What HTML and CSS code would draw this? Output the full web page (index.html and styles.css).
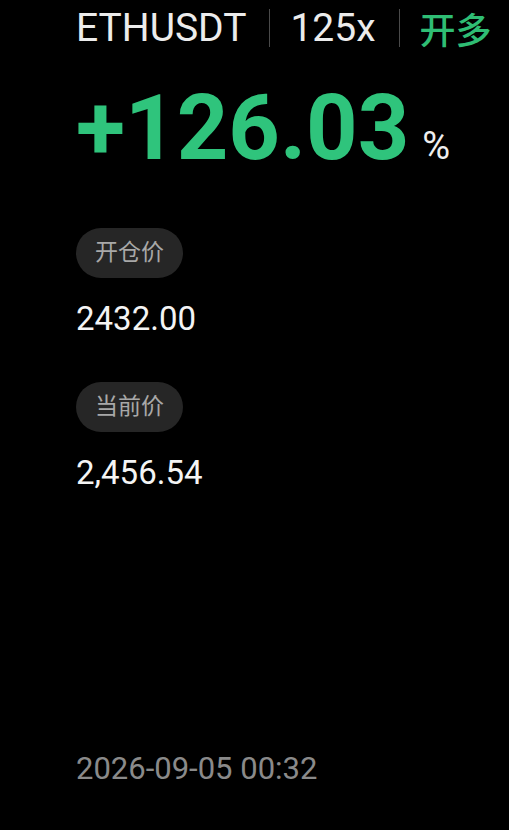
FILE: index.html
```html
<!DOCTYPE html>
<html lang="zh-CN">
<head>
    <meta charset="UTF-8">
    <meta name="viewport" content="width=device-width, initial-scale=1.0">
    <title>ETHUSDT</title>
    <link rel="stylesheet" href="styles.css">
</head>
<body>
    <div class="card">
        <div class="head">
            <span class="symbol">ETHUSDT</span>
            <span class="sep"></span>
            <span class="lev">125x</span>
            <span class="sep"></span>
            <span class="side">开多</span>
        </div>

        <div class="pnl">
            <span class="pnl-num">+126.03</span>
            <span class="pnl-unit">%</span>
        </div>

        <div class="row">
            <span class="pill">开仓价</span>
            <div class="val">2432.00</div>
        </div>
        <div class="row">
            <span class="pill">当前价</span>
            <div class="val">2,456.54</div>
        </div>

        <div class="time">2026-09-05 00:32</div>
    </div>
</body>
</html>
```

FILE: styles.css
```css
html, body {
    margin: 0;
    background: #000;
}
body {
    font-family: Roboto, "Noto Sans CJK SC", sans-serif;
    color: #f2f2f2;
    width: 509px;
    height: 830px;
    overflow: hidden;
}
.card {
    padding: 0 0 0 76px;
    display: flex;
    flex-direction: column;
    height: 830px;
    box-sizing: border-box;
}
.head {
    display: flex;
    align-items: center;
    height: 56px;
    font-size: 39px;
}
.symbol {
    color: #ececec;
}
.sep {
    width: 1px;
    height: 38px;
    background: #4a4a4a;
    margin: 0 20px 0 23px;
}
.lev {
    color: #ececec;
}
.side {
    color: #2fbd74;
    font-size: 36px;
    font-weight: 500;
}
.pnl {
    display: flex;
    align-items: baseline;
    margin-top: 20px;
    height: 104px;
}
.pnl-num {
    color: #2fc47c;
    font-size: 90px;
    font-weight: 700;
}
.pnl-unit {
    color: #eee;
    font-size: 38px;
    margin-left: 13px;
}
.row {
    margin-top: 48px;
}
.row + .row {
    margin-top: 44px;
}
.pill {
    display: inline-block;
    background: #262626;
    color: #a8a8a8;
    font-size: 23px;
    line-height: 50px;
    padding: 0 19px;
    border-radius: 25px;
}
.val {
    font-size: 33px;
    font-weight: 400;
    margin-top: 21px;
    color: #f4f4f4;
}
.time {
    margin-top: auto;
    margin-bottom: 43px;
    font-size: 31px;
    color: #8a8a8a;
}
```
